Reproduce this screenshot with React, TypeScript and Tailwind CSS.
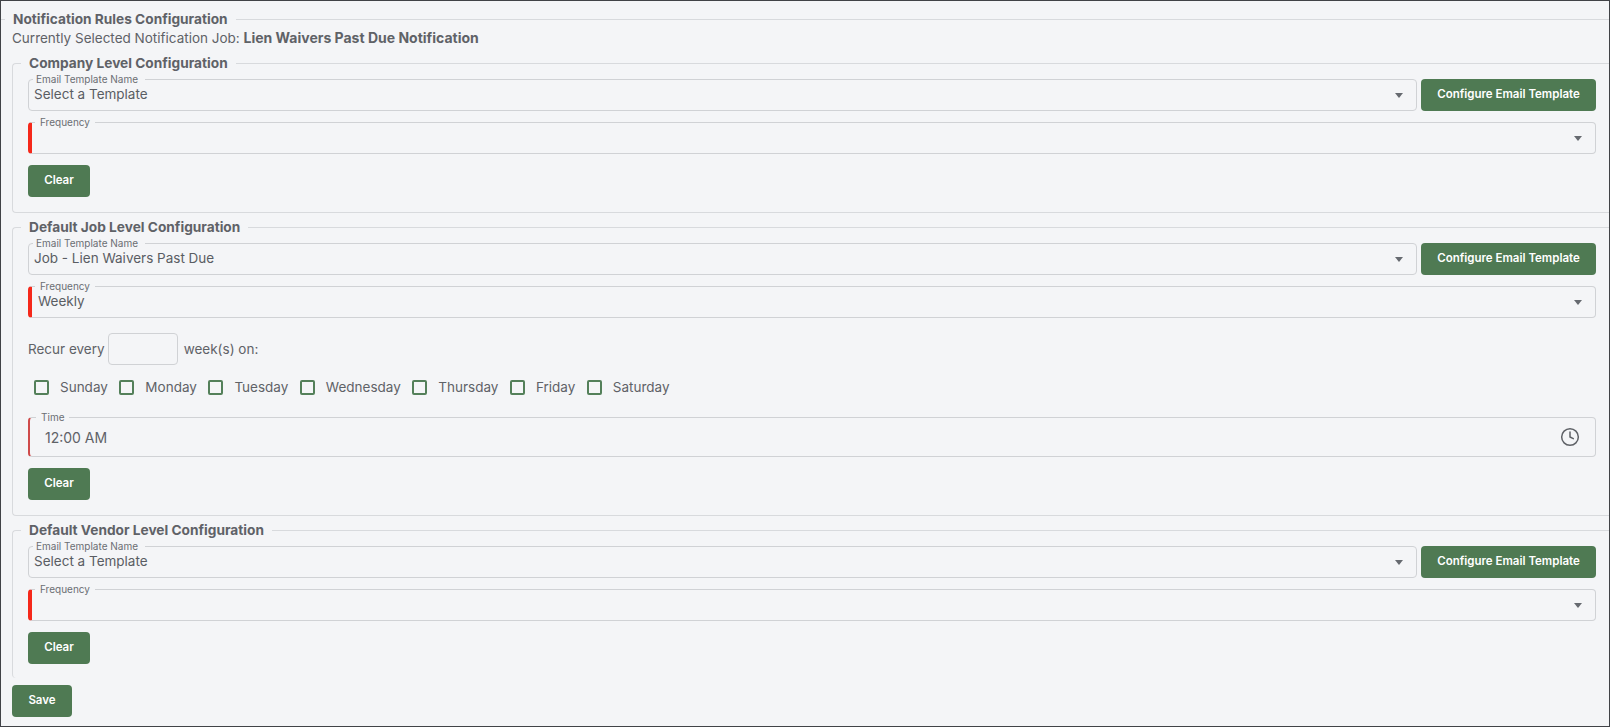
import type { ReactNode } from "react";
import { Clock } from "lucide-react";

const days = ["Sunday", "Monday", "Tuesday", "Wednesday", "Thursday", "Friday", "Saturday"];

function Button({ children, className = "" }: { children: ReactNode; className?: string }) {
  return (
    <button
      type="button"
      className={`h-8 rounded-[4px] bg-[#4f7a53] text-[11.5px] font-semibold text-white ${className}`}
    >
      {children}
    </button>
  );
}

function Caret() {
  return (
    <svg viewBox="0 0 8 5" className="h-[5px] w-2 fill-[#666a70]">
      <path d="M0 0h8L4 5z" />
    </svg>
  );
}

function Field({
  label,
  value,
  required,
  className = "",
}: {
  label: string;
  value?: string;
  required?: boolean;
  className?: string;
}) {
  return (
    <div
      className={`relative flex h-8 min-w-0 items-center rounded-[4px] border border-[#d0d2d5] pr-[13px] ${
        required ? "border-l-4 border-l-[#f5281a]" : ""
      } ${className}`}
    >
      <span
        className={`absolute -top-[7px] bg-[#f4f5f7] text-[10px] leading-3 text-[#6b6e73] ${
          required ? "left-[3px] px-[5px]" : "left-[4px] pl-[3px] pr-[7px]"
        }`}
      >
        {label}
      </span>
      <span className={`flex-1 pb-[2px] text-[13.5px] text-[#5a5d63] ${required ? "pl-[6px]" : "pl-[5px]"}`}>
        {value}
      </span>
      <Caret />
    </div>
  );
}

function TemplateRow({ value }: { value: string }) {
  return (
    <div className="flex gap-1">
      <Field label="Email Template Name" value={value} className="flex-1" />
      <Button className="w-[175px]">Configure Email Template</Button>
    </div>
  );
}

function Section({
  title,
  children,
  className = "",
}: {
  title: string;
  children: ReactNode;
  className?: string;
}) {
  return (
    <fieldset
      className={`min-w-0 rounded-l-[4px] border border-r-0 border-[#d8dadd] pl-[15px] pr-[13px] ${className}`}
    >
      <legend className="-ml-[7px] px-2 text-[13.7px] leading-5 font-bold text-[#5f6267]">
        {title}
      </legend>
      <div className="flex flex-col items-start gap-[11px] pt-[6px] [&>*]:self-stretch [&>button]:self-start">
        {children}
      </div>
    </fieldset>
  );
}

export default function App() {
  return (
    <div
      className="h-[727px] w-full overflow-hidden border border-[#414347] bg-[#f4f5f7] pt-2"
      style={{ fontFamily: "Inter, sans-serif" }}
    >
      <fieldset className="min-w-0 border-t border-[#d8dadd] pl-[11px]">
        <legend className="-ml-[7px] px-2 text-[13.7px] leading-5 font-bold text-[#5f6267]">
          Notification Rules Configuration
        </legend>
        <p className="text-[13.5px] leading-[18px] text-[#5f6267]">
          Currently Selected Notification Job:{" "}
          <span className="text-[14px] font-bold">Lien Waivers Past Due Notification</span>
        </p>

        <Section title="Company Level Configuration" className="mt-[6px] pb-[15px]">
          <TemplateRow value="Select a Template" />
          <Field label="Frequency" required />
          <Button className="w-[62px]">Clear</Button>
        </Section>

        <Section title="Default Job Level Configuration" className="mt-1 pb-[15px]">
          <TemplateRow value="Job - Lien Waivers Past Due" />
          <Field label="Frequency" value="Weekly" required />

          <div className="mt-1 flex items-center text-[13.5px] text-[#5f6267]">
            Recur every
            <span className="ml-[3px] mr-[6px] h-8 w-[70px] rounded-[4px] border border-[#d0d2d5]" />
            week(s) on:
          </div>

          <div className="mt-px flex h-5 items-center pl-[6px] text-[13.5px] text-[#5f6267]">
            {days.map((day) => (
              <label key={day} className="mr-[11.5px] flex items-center gap-[11px]">
                <span className="size-[15px] rounded-[2px] border-2 border-[#54805a]" />
                {day}
              </label>
            ))}
          </div>

          <div className="relative mt-[9px] flex h-10 items-center justify-between rounded-[4px] border border-[#d0d2d5] border-l-2 border-l-[#cf4a4a] pl-[15px] pr-[15px] text-[14px] text-[#5f6267]">
            <span className="absolute -top-[7px] left-[6px] bg-[#f4f5f7] px-[5px] text-[10px] leading-3 text-[#6b6e73]">
              Time
            </span>
            12:00 AM
            <Clock className="size-5 text-[#5f6267]" strokeWidth={1.8} />
          </div>
          <Button className="w-[62px]">Clear</Button>
        </Section>

        <Section title="Default Vendor Level Configuration" className="mt-1 border-b-0 pb-[14px]">
          <TemplateRow value="Select a Template" />
          <Field label="Frequency" required />
          <Button className="w-[62px]">Clear</Button>
        </Section>

        <Button className="mt-[7px] w-[60px]">Save</Button>
      </fieldset>
    </div>
  );
}
